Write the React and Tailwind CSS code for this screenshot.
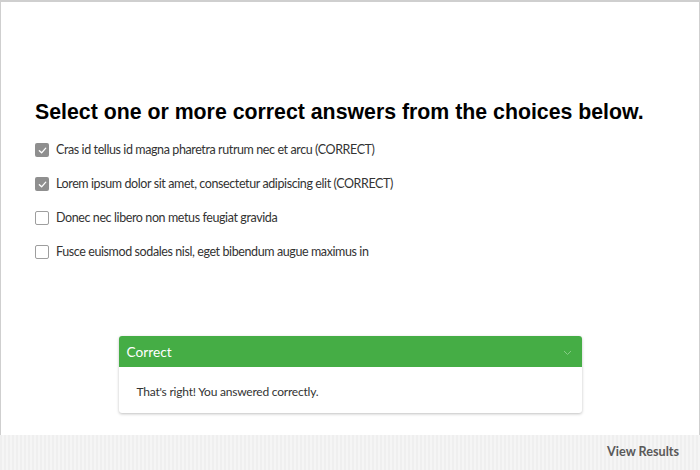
import React from 'react'

const choices = [
  { text: "Cras id tellus id magna pharetra rutrum nec et arcu (CORRECT)", checked: true },
  { text: "Lorem ipsum dolor sit amet, consectetur adipiscing elit (CORRECT)", checked: true },
  { text: "Donec nec libero non metus feugiat gravida", checked: false },
  { text: "Fusce euismod sodales nisl, eget bibendum augue maximus in", checked: false },
];

function Checkbox({ checked }) {
  if (checked) {
    return (
      <span className="flex h-[14px] w-[14px] items-center justify-center rounded-[2px] bg-[#8f8f8f]">
        <svg width="9" height="9" viewBox="0 0 10 10" fill="none">
          <path d="M1.5 5.2 L4 7.6 L8.6 2.4" stroke="white" strokeWidth="1.5" strokeLinecap="round" strokeLinejoin="round" />
        </svg>
      </span>
    );
  }
  return <span className="block h-[14px] w-[14px] rounded-[2px] border border-[#9e9e9e] bg-white"></span>;
}

export default function App() {
  return (
    <div className="flex h-[470px] w-[700px] flex-col bg-white font-['Lato',sans-serif]">
      <div className="flex-1 border border-b-0 border-t-2 border-[#cfcfcf] px-[34px] pt-[98px]">
        <h1 className="font-['Liberation_Sans',Arial,sans-serif] text-[21.3px] font-bold leading-[24px] text-black">
          Select one or more correct answers from the choices below.
        </h1>

        <div className="mt-[9px] flex flex-col">
          {choices.map((c, i) => (
            <label key={i} className="flex h-[34px] items-center gap-[7px]">
              <Checkbox checked={c.checked} />
              <span className="text-[12.5px] tracking-[-0.4px] text-[#333]">{c.text}</span>
            </label>
          ))}
        </div>

        <div className="mx-auto mt-[67px] w-[463px] rounded-[3px] bg-white shadow-[0_1px_3px_rgba(0,0,0,0.25)]">
          <div className="flex h-[31px] items-center justify-between rounded-t-[3px] bg-[#45ad45] pl-[8px] pr-[10px] pt-[2px]">
            <span className="text-[13.7px] text-white">Correct</span>
            <svg width="9" height="6" viewBox="0 0 9 6" fill="none">
              <path d="M1 1 L4.5 4.5 L8 1" stroke="#86cc86" strokeWidth="1" />
            </svg>
          </div>
          <div className="flex h-[46px] items-center pl-[18px] pt-[4px] text-[12px] tracking-[-0.22px] text-[#333]">
            That's right! You answered correctly.
          </div>
        </div>
      </div>

      <div className="flex h-[35px] items-center justify-end bg-[repeating-linear-gradient(90deg,#efefef_0_2px,#f5f5f5_2px_4px)] pr-[21px]">
        <span className="text-[12.6px] font-bold text-[#595959]">View Results</span>
      </div>
    </div>
  );
}
